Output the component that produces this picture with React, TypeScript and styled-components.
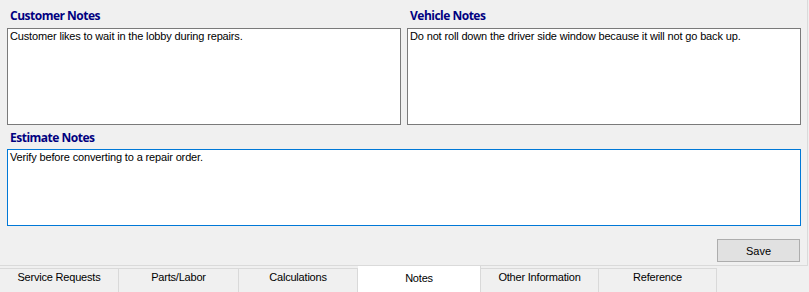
import React from "react";
import styled, { createGlobalStyle } from "styled-components";

const GlobalStyle = createGlobalStyle`
  html, body {
    margin: 0;
    padding: 0;
    background: #f0f0f0;
  }
  body {
    font-family: "Liberation Sans", Arial, sans-serif;
    font-size: 11px;
    color: #000;
  }
`;

const Window = styled.div`
  width: 809px;
  height: 292px;
  display: flex;
  flex-direction: column;
  background: #f0f0f0;
  overflow: hidden;
`;

const TabPage = styled.div`
  box-sizing: border-box;
  width: 808px;
  height: 266px;
  padding: 8px 6px 0 7px;
  border-right: 1px solid #dadada;
  border-bottom: 1px solid #dadada;
  display: flex;
  flex-direction: column;
`;

const TopRow = styled.div`
  display: grid;
  grid-template-columns: 394px 394px;
  column-gap: 6px;
`;

const NoteGroup = styled.div<{ $offset?: number }>`
  display: flex;
  flex-direction: column;
  margin-top: ${(p) => p.$offset ?? 0}px;
`;

const GroupLabel = styled.div<{ $space: number }>`
  font-family: "Open Sans", "Noto Sans", sans-serif;
  font-weight: 700;
  font-size: 12px;
  line-height: 16px;
  letter-spacing: -0.5px;
  color: #000080;
  padding-left: 3px;
  margin-bottom: ${(p) => p.$space}px;
`;

const NoteBox = styled.div<{ $height: number; $focused?: boolean }>`
  box-sizing: border-box;
  height: ${(p) => p.$height}px;
  background: #fff;
  border: 1px solid ${(p) => (p.$focused ? "#0078d7" : "#7a7a7a")};
  padding: 1px 2px;
  font-size: 11px;
  line-height: 13px;
  letter-spacing: -0.15px;
  white-space: pre-wrap;
`;

const Footer = styled.div`
  display: flex;
  justify-content: flex-end;
  margin-top: 13px;
  padding-right: 1px;
`;

const SaveButton = styled.button`
  box-sizing: border-box;
  width: 83px;
  height: 23px;
  padding: 0;
  background: #e1e1e1;
  border: 1px solid #adadad;
  font-family: "Liberation Sans", Arial, sans-serif;
  font-size: 11px;
  color: #000;
`;

const TabStrip = styled.div`
  display: flex;
  align-items: flex-start;
  height: 26px;
`;

const Tab = styled.div<{ $width: number; $active?: boolean }>`
  box-sizing: border-box;
  width: ${(p) => p.$width}px;
  height: ${(p) => (p.$active ? 26 : 24)}px;
  margin-top: ${(p) => (p.$active ? 0 : 2)}px;
  padding-top: ${(p) => (p.$active ? 6 : 2)}px;
  background: ${(p) => (p.$active ? "#fff" : "#f0f0f0")};
  border-top: ${(p) => (p.$active ? "none" : "1px solid #d9d9d9")};
  border-right: 1px solid #d9d9d9;
  text-align: center;
  font-size: 11px;
  line-height: 13px;
  letter-spacing: -0.2px;
  white-space: nowrap;
`;

const tabs = [
  { label: "Service Requests", width: 119 },
  { label: "Parts/Labor", width: 120 },
  { label: "Calculations", width: 119 },
  { label: "Notes", width: 123, active: true },
  { label: "Other Information", width: 118 },
  { label: "Reference", width: 118 },
];

export default function App() {
  return (
    <>
      <GlobalStyle />
      <Window>
        <TabPage>
          <TopRow>
            <NoteGroup>
              <GroupLabel $space={4}>Customer Notes</GroupLabel>
              <NoteBox $height={97}>Customer likes to wait in the lobby during repairs.</NoteBox>
            </NoteGroup>
            <NoteGroup>
              <GroupLabel $space={4}>Vehicle Notes</GroupLabel>
              <NoteBox $height={97}>
                Do not roll down the driver side window because it will not go back up.
              </NoteBox>
            </NoteGroup>
          </TopRow>
          <NoteGroup $offset={5}>
            <GroupLabel $space={3}>Estimate Notes</GroupLabel>
            <NoteBox $height={77} $focused>
              Verify before converting to a repair order.
            </NoteBox>
          </NoteGroup>
          <Footer>
            <SaveButton>Save</SaveButton>
          </Footer>
        </TabPage>
        <TabStrip>
          {tabs.map((t) => (
            <Tab key={t.label} $width={t.width} $active={t.active}>
              {t.label}
            </Tab>
          ))}
        </TabStrip>
      </Window>
    </>
  );
}
